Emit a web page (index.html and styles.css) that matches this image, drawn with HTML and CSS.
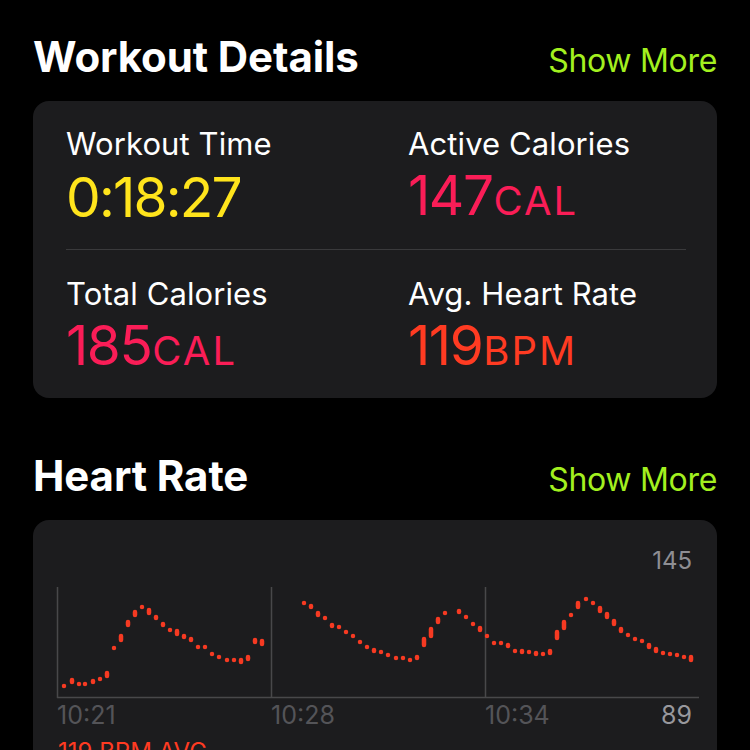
FILE: index.html
```html
<!DOCTYPE html>
<html>
<head>
<meta charset="utf-8">
<link rel="stylesheet" href="styles.css">
</head>
<body>
<main class="page">
  <header class="section-head first">
    <h2 class="title">Workout Details</h2>
    <a class="more">Show More</a>
  </header>
  <section class="card details">
    <div class="stat">
      <div class="label">Workout Time</div>
      <div class="value yellow">0:18:27</div>
    </div>
    <div class="stat">
      <div class="label">Active Calories</div>
      <div class="value pink">147<span class="unit">CAL</span></div>
    </div>
    <div class="divider"></div>
    <div class="stat">
      <div class="label">Total Calories</div>
      <div class="value pink">185<span class="unit">CAL</span></div>
    </div>
    <div class="stat">
      <div class="label">Avg. Heart Rate</div>
      <div class="value red">119<span class="unit">BPM</span></div>
    </div>
  </section>

  <header class="section-head second">
    <h2 class="title">Heart Rate</h2>
    <a class="more">Show More</a>
  </header>
  <section class="card chart-card">
    <div class="max">145</div>
    <svg class="chart" width="644" height="114" viewBox="55 585 644 114">
      <g class="axes">
        <line x1="56.5" y1="587" x2="56.5" y2="698"/>
        <line x1="270.5" y1="587" x2="270.5" y2="698"/>
        <line x1="484.5" y1="587" x2="484.5" y2="698"/>
        <line x1="56" y1="697.5" x2="698" y2="697.5"/>
      </g>
      <path class="dots" d="
M63 686v0.1 M71 680V682 M78 684v0.1 M84 684v0.1 M92 681V682 M99 679v0.1 M106 673V676 M113 648v0.1 M120 636V640 M127 622V625 M134 612V615 M141 607v0.1 M148 610V613 M155 617V618 M162 624V625 M169 630v0.1 M176 631V634 M183 636V637 M190 639V640 M197 647v0.1 M204 647v0.1 M211 654v0.1 M218 657v0.1 M226 660v0.1 M233 660v0.1 M240 660V662 M247 657V659 M254 640V642 M261 641V644
M303 603v0.1 M310 606V607 M317 613V615 M324 618v0.1 M331 625V626 M338 627v0.1 M345 632v0.1 M352 636V636.1 M359 642V642.1 M366 647v0.1 M373 650V651 M380 652v0.1 M387 655v0.1 M395 658v0.1 M402 658v0.1 M409 660v0.1 M416 657V658 M423 639V645 M430 629V636 M437 619V622 M444 613v0.1 M458 611V612 M465 617v0.1 M472 624v0.1 M479 628V630 M486 636v0.1 M493 643v0.1 M500 643v0.1 M507 645V646 M514 651v0.1 M521 651V652 M528 652v0.1 M535 653V654 M542 654v0.1 M549 651V653 M556 632V638 M563 622V628 M570 615v0.1 M577 603V607 M585 599v0.1 M592 603v0.1 M599 608V611 M606 614V617 M613 621V624 M620 629V631 M627 635v0.1 M634 639v0.1 M641 641v0.1 M648 645V647 M655 649V651 M662 653v0.1 M669 654v0.1 M676 655v0.1 M683 657v0.1 M690 657V660"/>
    </svg>
    <div class="times">
      <span class="t">10:21</span>
      <span class="t">10:28</span>
      <span class="t">10:34</span>
      <span class="min">89</span>
    </div>
    <div class="avg">119 BPM AVG</div>
  </section>
</main>
</body>
</html>
```
FILE: styles.css
```css
html, body {
  margin: 0;
  padding: 0;
  background: #000;
}
body {
  font-family: Inter, "Liberation Sans", sans-serif;
  color: #fff;
  width: 750px;
  height: 750px;
  overflow: hidden;
}
.page {
  padding: 0 33px;
}
.section-head {
  display: flex;
  justify-content: space-between;
  align-items: baseline;
  height: 101px;
  box-sizing: border-box;
}
.section-head.first {
  padding-top: 32px;
}
.section-head.second {
  height: 122px;
  padding-top: 53px;
}
.title {
  margin: 0;
  font-size: 42px;
  font-weight: 700;
  letter-spacing: -0.1px;
  line-height: 50px;
}
.more {
  font-size: 32px;
  color: #a3f01f;
  letter-spacing: -0.3px;
  line-height: 50px;
}
.card {
  background: #1c1c1e;
  border-radius: 16px;
}
.details {
  display: grid;
  grid-template-columns: 342px 1fr;
  align-content: start;
  padding: 23px 31px 0 33px;
  height: 297px;
  box-sizing: border-box;
}
.stat {
  display: flex;
  flex-direction: column;
}
.label {
  font-size: 31px;
  line-height: 40px;
  letter-spacing: 0.1px;
  color: #fff;
}
.value {
  font-size: 55px;
  line-height: 62px;
  letter-spacing: -1.5px;
}
.yellow.value {
  letter-spacing: -1.8px;
  margin-top: 2px;
}
.unit {
  font-size: 40px;
  letter-spacing: 2px;
  margin-left: 1px;
}
.yellow { color: #ffe41c; }
.pink { color: #fa1d57; }
.red { color: #ff3b22; }
.divider {
  grid-column: 1 / -1;
  height: 1px;
  background: #3a3a3c;
  margin: 17px 0 24px;
}
.chart-card {
  height: 260px;
  padding: 26px 25px 0 23px;
  box-sizing: border-box;
  border-bottom-left-radius: 0;
  border-bottom-right-radius: 0;
}
.max {
  text-align: right;
  font-size: 24px;
  line-height: 30px;
  color: #8e8e93;
}
.chart {
  display: block;
  margin-top: 9px;
}
.axes line {
  stroke: #48484a;
  stroke-width: 1.5;
}
.dots {
  fill: none;
  stroke: #f63a22;
  stroke-width: 4.5;
  stroke-linecap: round;
}
.times {
  display: grid;
  grid-template-columns: 214px 214px 1fr auto;
  font-size: 25px;
  line-height: 32px;
  color: #545458;
  padding-left: 1px;
}
.min {
  color: #98989d;
}
.avg {
  color: #ff3b22;
  font-size: 24px;
  line-height: 30px;
  margin-top: 6px;
  padding-left: 2px;
}
```
